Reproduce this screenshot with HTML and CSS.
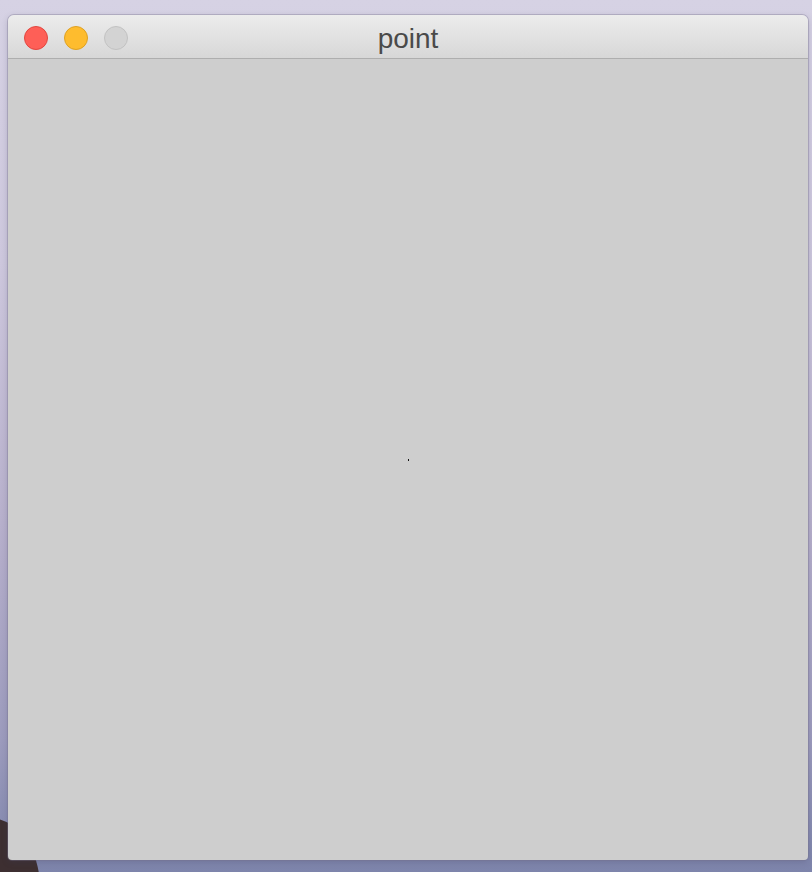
FILE: index.html
```html
<!DOCTYPE html>
<html>
<head>
<meta charset="utf-8">
<link rel="stylesheet" href="styles.css">
</head>
<body>
<div class="desktop">
  <div class="rock"></div>
  <div class="window">
    <div class="titlebar">
      <div class="lights">
        <span class="light close"></span>
        <span class="light minimize"></span>
        <span class="light zoom"></span>
      </div>
      <div class="title">point</div>
    </div>
    <div class="content">
      <span class="dot"></span>
    </div>
  </div>
</div>
</body>
</html>
```
FILE: styles.css
```css
html, body {
  margin: 0;
  padding: 0;
}
.desktop {
  position: relative;
  width: 812px;
  height: 872px;
  overflow: hidden;
  background: linear-gradient(180deg, #d6d2e4 0%, #cdc7dd 30%, #b7b0cc 60%, #9c9bbd 85%, #7d84ab 100%);
  padding: 15px 0 0 8px;
  box-sizing: border-box;
}
.rock {
  position: absolute;
  left: -60px;
  top: 818px;
  width: 100px;
  height: 140px;
  border-radius: 50%;
  background: #3d2f31;
}
.window {
  position: relative;
  width: 800px;
  height: 845px;
  border-radius: 6px 6px 4px 4px;
  overflow: hidden;
  display: flex;
  flex-direction: column;
  box-shadow: 0 0 0 1px rgba(120, 115, 140, 0.35), 0 2px 6px rgba(60, 60, 90, 0.25);
}
.titlebar {
  height: 43px;
  flex: none;
  position: relative;
  background: linear-gradient(180deg, #ececec 0%, #e2e2e2 50%, #d7d7d7 100%);
  border-bottom: 1px solid #aeaeae;
  display: flex;
  align-items: center;
}
.lights {
  display: flex;
  gap: 16px;
  padding-left: 16px;
  padding-top: 3px;
}
.light {
  width: 24px;
  height: 24px;
  border-radius: 50%;
  box-sizing: border-box;
}
.close {
  background: #fe5f57;
  border: 1px solid #e2463f;
}
.minimize {
  background: #febc2e;
  border: 1px solid #dea123;
}
.zoom {
  background: #d3d3d3;
  border: 1px solid #c2c2c2;
}
.title {
  position: absolute;
  left: 0;
  right: 0;
  top: 9px;
  text-align: center;
  font-family: "Liberation Sans", Arial, sans-serif;
  font-size: 28px;
  color: #4a4a4a;
  line-height: 30px;
}
.content {
  flex: 1;
  background: #cecece;
  position: relative;
}
.dot {
  position: absolute;
  left: 400px;
  top: 400px;
  width: 1px;
  height: 2px;
  background: #111;
}
```
